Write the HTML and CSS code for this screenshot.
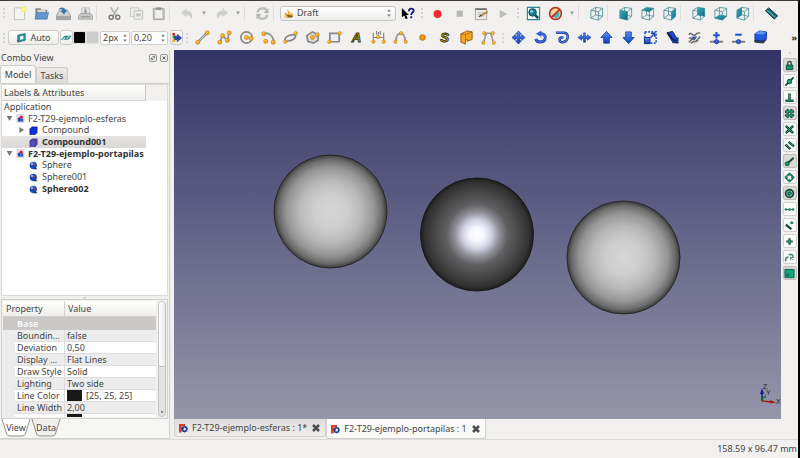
FILE: index.html
```html
<!DOCTYPE html>
<html lang="en">
<head>
    <meta charset="UTF-8">
    <meta name="viewport" content="width=device-width, initial-scale=1.0">
    <title>FreeCAD</title>
    <link rel="stylesheet" href="styles.css">
</head>
<body>
    <svg class="sprite" aria-hidden="true">
        <defs>
            <linearGradient id="blue" x1="0" y1="0" x2="0" y2="1"><stop offset="0" stop-color="#5a94ff"/><stop offset="1" stop-color="#0a3cc0"/></linearGradient>
            <linearGradient id="teal" x1="0" y1="0" x2="1" y2="1"><stop offset="0" stop-color="#3aa9ba"/><stop offset="1" stop-color="#0c6c80"/></linearGradient>
            <radialGradient id="light"><stop offset="0" stop-color="#d6d6d6"/><stop offset="0.3" stop-color="#cecece"/><stop offset="0.55" stop-color="#b9b9b9"/><stop offset="0.78" stop-color="#959595"/><stop offset="0.92" stop-color="#6a6a6a"/><stop offset="1" stop-color="#3c3c3c"/></radialGradient>
            <radialGradient id="dark"><stop offset="0" stop-color="#ffffff"/><stop offset="0.13" stop-color="#f6f6ff"/><stop offset="0.26" stop-color="#cfcfe0"/><stop offset="0.4" stop-color="#8e8e96"/><stop offset="0.54" stop-color="#606063"/><stop offset="0.75" stop-color="#474747"/><stop offset="0.93" stop-color="#303030"/><stop offset="1" stop-color="#1c1c1c"/></radialGradient>
        </defs>
        <symbol id="dot" viewBox="0 0 6 6"><circle cx="3" cy="3" r="2.2" fill="#f9a81c" stroke="#b8770f" stroke-width=".6"/><circle cx="2.4" cy="2.3" r=".7" fill="#ffe08a"/></symbol>
        <symbol id="cube" viewBox="0 0 16 16"><path d="M2 4.500 10 6v9L2 13zM2 4.500 7 1.500 14.500 2.500 10 6M14.500 2.500v8.500L10 15M7 1.500v8L2 13M7 9.500l7.500 1.500" fill="none" stroke="#4d909b" stroke-width=".9"/></symbol>
        <symbol id="doc" viewBox="0 0 10 10"><path d="M1 .5h8v9H1z" fill="#dfe2ee" stroke="#c3c4d0" stroke-width=".6"/><path d="M2 4.500 5 3.500v5L2 8z" fill="#1c3fae"/><circle cx="5.800" cy="3.500" r="1.800" fill="#d2232a"/><path d="M5 5h3v3.500H5z" fill="#2d55cf"/></symbol>
        <symbol id="ball" viewBox="0 0 10 10"><path d="M6 6l3.500 3.200H4z" fill="#222"/><circle cx="4.800" cy="4.800" r="4" fill="#1846b0"/><circle cx="3.500" cy="3.300" r="1.500" fill="#7ca8f5"/><circle cx="6" cy="4" r="1" fill="#e03a3a"/></symbol>
        <symbol id="app" viewBox="0 0 10 10"><path d="M1 1h6v2H3.500v1.500H6V6.500H3.500V9.500H1z" fill="#e03a1c"/><circle cx="6.500" cy="6" r="2.300" fill="none" stroke="#1d3f9c" stroke-width="1.600"/><path d="M6.500 2.700v1.300M6.500 8v1.400M3.200 6h1.300M8.500 6h1.300M4.200 3.700l.9.900M8 7.400l.9.900M8.900 3.700l-.9.900M5 7.400l-.9.900" stroke="#1d3f9c" stroke-width="1"/></symbol>
        <symbol id="spin" viewBox="0 0 6 10"><path d="M1.200 3.500 3 1.200 4.800 3.500zM1.200 6.500 3 8.800 4.800 6.500z" fill="#777"/></symbol>
        <symbol id="drop" viewBox="0 0 6 6"><path d="M.8 1.500h4.400L3 4.800z" fill="#a0a0a0"/></symbol>
        <symbol id="cross" viewBox="0 0 10 10"><path d="M2 2 8 8M8 2 2 8" stroke="#4d4d4d" stroke-width="2.600"/></symbol>
    </svg>

    <header class="toolbars">
        <div class="toolbar">
            <span class="handle"></span>
            <button class="tool" aria-label="New"><svg viewBox="0 0 16 16"><path d="M2.500 2h11v12.500h-11z" fill="#f4f4f2" stroke="#bdbdb8"/><circle cx="12.500" cy="3.500" r="3" fill="#f8ee62"/><circle cx="12.500" cy="3.500" r="1.300" fill="#fffbc0"/></svg></button>
            <button class="tool" aria-label="Open"><svg viewBox="0 0 16 16"><path d="M1.500 2.500H7l1 1.500h6v9H1.500z" fill="#85827b"/><path d="M3.500 4h9v4h-9z" fill="#d6d6d2"/><path d="M3 7h12.500l-1.500 7H1z" fill="#6796cd" stroke="#4778b2" stroke-width=".7"/></svg></button>
            <button class="tool" aria-label="Save"><svg viewBox="0 0 16 16"><path d="M3.500 5h9l3 5v4.500H.5V10z" fill="#d2d2ce" stroke="#86868a" stroke-width=".8"/><path d="M1 10.500h14v3.500H1z" fill="#a5a5a3"/><path d="M2.500 5C3 1 9 .5 10 4h2.200L8.500 9 4.800 5h2C6.500 3 4 3 2.500 5z" fill="#3d73ae"/></svg></button>
            <button class="tool" aria-label="Print"><svg viewBox="0 0 16 16"><path d="M4 2h8v6H4z" fill="#eee" stroke="#aaa" stroke-width=".8"/><path d="M7 3h2v2.500h1.500L8 8 5.500 5.500H7z" fill="#9a9a9a"/><path d="M2.500 8h11l2 2.500V14H.5v-3.500z" fill="#c9c9c7" stroke="#999" stroke-width=".8"/><path d="M3 11.500h10" stroke="#888"/></svg></button>
            <span class="separator"></span>
            <button class="tool" aria-label="Cut"><svg viewBox="0 0 16 16"><path d="M4 1.500 10 11M12 1.500 6 11" stroke="#b0b0b0" stroke-width="1.700"/><circle cx="4.500" cy="12" r="2.200" fill="none" stroke="#777" stroke-width="1.500"/><circle cx="11.500" cy="12" r="2.200" fill="none" stroke="#777" stroke-width="1.500"/></svg></button>
            <button class="tool" aria-label="Copy"><svg viewBox="0 0 16 16"><path d="M1.500 2h9v9h-9z" fill="#efefed" stroke="#c4c4c2"/><path d="M5.500 5h9v9h-9z" fill="#ececea" stroke="#bebebc"/><path d="M7.500 8h5v3h-5z" fill="#c5c5c3"/></svg></button>
            <button class="tool" aria-label="Paste"><svg viewBox="0 0 16 16"><path d="M2.500 2.500h11.500v12H2.500z" fill="#c5c5c3" stroke="#a4a4a2"/><path d="M4.500 4.500h7.500v8.500H4.500z" fill="#f0f0ee"/><path d="M5.500 1.500h5.500v2.500H5.500z" fill="#8f8f8f"/></svg></button>
            <span class="separator"></span>
            <button class="tool" aria-label="Undo"><svg viewBox="0 0 16 16"><path d="M1 7 7 2v3c6 0 8 5 4 9.500.5-3.500-1-5-4-5V12z" fill="#cfcfcd"/></svg></button>
            <button class="arrow" aria-label="Undo list"><svg viewBox="0 0 6 6"><use href="#drop"/></svg></button>
            <button class="tool" aria-label="Redo"><svg viewBox="0 0 16 16"><path d="M15 7 9 2v3C3 5 1 10 5 14.500 4.500 11 6 9.500 9 9.500V12z" fill="#cfcfcd"/></svg></button>
            <button class="arrow" aria-label="Redo list"><svg viewBox="0 0 6 6"><use href="#drop"/></svg></button>
            <span class="separator"></span>
            <button class="tool" aria-label="Refresh"><svg viewBox="0 0 16 16"><path d="M3 7c0-5 7-6 9.500-2.500M13 9c0 5-7 6-9.500 2.500" fill="none" stroke="#bdbdbb" stroke-width="2.500"/><path d="M14.500 2v5.500H9zM1.500 14V8.500H7z" fill="#b6b6b4"/></svg></button>
            <span class="separator"></span>
            <div class="combo">
                <svg viewBox="0 0 12 12"><path d="M4 .5 7 6l4 1.500v3H5z" fill="#e8b02c"/><path d="M1 5.500 4.500 8 11 9.500 9 11.500H1z" fill="#8a5a12"/><path d="M1 5v6.500h4z" fill="#f3cf5d"/></svg>
                <select aria-label="Workbench"><option>Draft</option></select>
                <svg class="spin" viewBox="0 0 6 10"><use href="#spin"/></svg>
            </div>
            <button class="tool" aria-label="What's this?"><svg viewBox="0 0 16 16"><path d="M2 2v10l2.500-2 1.700 4 2-1-1.700-3.500H9.500z" fill="#000"/><path d="M9.500 5.500C9.500 2 14.500 2 14.500 5c0 2-2.500 2-2.500 4.500M12 11v2" fill="none" stroke="#1d1b8e" stroke-width="2"/></svg></button>
            <span class="handle"></span>
            <button class="tool" aria-label="Record macro"><svg viewBox="0 0 16 16"><circle cx="8" cy="8.500" r="4.200" fill="#ea2a2d"/></svg></button>
            <button class="tool" aria-label="Stop macro"><svg viewBox="0 0 16 16"><path d="M5 5h6.500v6.500H5z" fill="#b5b5b3"/></svg></button>
            <button class="tool" aria-label="Macros"><svg viewBox="0 0 16 16"><path d="M1.500 3h12v11.500h-12z" fill="#ecece8" stroke="#999994" stroke-width=".9"/><path d="M1.500 2.500h12v1.800h-12z" fill="#6d6d6d"/><path d="M3.500 7h7M3.500 9h5M3.500 11h7" stroke="#bbb" stroke-width=".8"/><path d="M7 10.500 14.500 6" stroke="#b98a36" stroke-width="2"/><path d="M5.500 11.500 8 9.500" stroke="#444" stroke-width="1.200"/></svg></button>
            <button class="tool" aria-label="Run macro"><svg viewBox="0 0 16 16"><path d="M4 4v9l8-4.500z" fill="#bcbcba"/></svg></button>
            <span class="handle"></span>
            <button class="tool" aria-label="Fit all"><svg viewBox="0 0 16 16"><path d="M1.500 1.500h13v13h-13z" fill="#eef6f7" stroke="#2a8494" stroke-width="1.200"/><path d="M9 9l4 4" stroke="#0c4d5a" stroke-width="2.800"/><circle cx="7" cy="6.800" r="4" fill="#167f94" stroke="#0a4856"/><circle cx="6" cy="5.500" r="1.600" fill="#8bd2de"/></svg></button>
            <button class="tool" aria-label="Draw style"><svg viewBox="0 0 16 16"><circle cx="8" cy="8" r="6.300" fill="#f5c9a9" stroke="#b32822" stroke-width="1.600"/><path d="M4.500 6 8 3.500l4 1.500v6L8.500 13l-4-2z" fill="#45b5c4"/><path d="M4 5 9 3l3 2-7 6z" fill="#ffe08c"/><path d="M12.500 3.500 3.500 12.500" stroke="#c32a22" stroke-width="1.800"/></svg></button>
            <button class="arrow" aria-label="Draw style list"><svg viewBox="0 0 6 6"><use href="#drop"/></svg></button>
            <span class="separator"></span>
            <button class="tool" aria-label="Isometric"><svg viewBox="0 0 16 16"><use href="#cube"/></svg></button>
            <span class="separator"></span>
            <button class="tool" aria-label="Front"><svg viewBox="0 0 16 16"><use href="#cube"/><path d="M2 4.500 10 6v9L2 13z" fill="url(#teal)"/></svg></button>
            <button class="tool" aria-label="Top"><svg viewBox="0 0 16 16"><use href="#cube"/><path d="M2 4.500 7 1.500l7.500 1L10 6z" fill="url(#teal)"/></svg></button>
            <button class="tool" aria-label="Right"><svg viewBox="0 0 16 16"><use href="#cube"/><path d="M10 6l4.500-3.500V11L10 15z" fill="url(#teal)"/></svg></button>
            <span class="separator"></span>
            <button class="tool" aria-label="Rear"><svg viewBox="0 0 16 16"><use href="#cube"/><path d="M7 1.500l7.500 1V11L7 9.500z" fill="url(#teal)"/></svg></button>
            <button class="tool" aria-label="Bottom"><svg viewBox="0 0 16 16"><use href="#cube"/><path d="M2 13l5-3.500 7.500 1.500L10 15z" fill="url(#teal)"/></svg></button>
            <button class="tool" aria-label="Left"><svg viewBox="0 0 16 16"><use href="#cube"/><path d="M2 4.500 7 1.500v8L2 13z" fill="url(#teal)"/></svg></button>
            <span class="separator"></span>
            <button class="tool" aria-label="Measure"><svg viewBox="0 0 16 16"><path d="M1.500 5 5 2l9.500 8.500-3.500 3.500z" fill="#1b5f6d" stroke="#17323a"/><path d="M3.500 4.500 12 12" stroke="#57a6b5" stroke-width="1.600"/></svg></button>
        </div>

        <div class="toolbar">
            <span class="handle"></span>
            <button class="framed auto"><svg viewBox="0 0 12 12"><path d="M2 3.500 10 1.500V9L2 11z" fill="#269aa8" stroke="#126271" stroke-width=".8"/><path d="M4.500 5 8 4v3.500l-3.500 1z" fill="#fff"/><path d="M1 9l2 2" stroke="#333"/></svg>Auto</button>
            <button class="framed small" aria-label="Construction mode"><svg viewBox="0 0 12 12"><path d="M0 8.500 4 4h7.500L8 8.500z" fill="#1c8390"/><path d="M2 8.500 4.500 6M6 7.500 9 4.500" stroke="#bfe6d2" stroke-width="1.200"/></svg></button>
            <button class="swatch black" aria-label="Line color"></button>
            <button class="swatch gray" aria-label="Face color"></button>
            <div class="spinbox width"><input type="text" value="2px" aria-label="Line width"><svg class="spin" viewBox="0 0 6 10"><use href="#spin"/></svg></div>
            <div class="spinbox scale"><input type="text" value="0,20" aria-label="Text size"><svg class="spin" viewBox="0 0 6 10"><use href="#spin"/></svg></div>
            <button class="framed small" aria-label="Apply style"><svg viewBox="0 0 12 12"><path d="M1.500 1h3v3h-3z" fill="#d92525"/><path d="M1.500 4h3v3h-3z" fill="#4dac2d"/><path d="M1.500 7h3v4h-3z" fill="#e8b921"/><path d="M4 4.500h3V2.500L11.500 6.500 7 10.500V8.500H4z" fill="#2346c0" stroke="#132468" stroke-width=".6"/></svg></button>
            <span class="handle"></span>
            <button class="tool" aria-label="Line"><svg viewBox="0 0 16 16"><path d="M3 13 13 3" stroke="#888" stroke-width="2.500"/><path d="M3 13 13 3" stroke="#ddd"/><use href="#dot" x="0" y="10" width="6" height="6"/><use href="#dot" x="10" y="0" width="6" height="6"/></svg></button>
            <button class="tool" aria-label="Wire"><svg viewBox="0 0 16 16"><path d="M3 13 6 6l5 5 2-8" fill="none" stroke="#999" stroke-width="2"/><use href="#dot" x="0" y="10" width="6" height="6"/><use href="#dot" x="3" y="3" width="6" height="6"/><use href="#dot" x="8" y="8" width="6" height="6"/><use href="#dot" x="10" y="0" width="6" height="6"/></svg></button>
            <button class="tool" aria-label="Circle"><svg viewBox="0 0 16 16"><circle cx="8" cy="8" r="6" fill="#eee" stroke="#888" stroke-width="1.800"/><use href="#dot" x="5" y="5" width="6" height="6"/><use href="#dot" x="10" y="6" width="6" height="6"/></svg></button>
            <button class="tool" aria-label="Arc"><svg viewBox="0 0 16 16"><path d="M3 4c6-2 10 3 11 9" fill="none" stroke="#999" stroke-width="2"/><use href="#dot" x="0" y="1" width="6" height="6"/><use href="#dot" x="2" y="9" width="6" height="6"/><use href="#dot" x="10" y="10" width="6" height="6"/></svg></button>
            <button class="tool" aria-label="Ellipse"><svg viewBox="0 0 16 16"><path d="M2 11c0-4 5-6 11-6 2 3-3 7-9 7-2 0-2-.5-2-1z" fill="#eee" stroke="#888" stroke-width="1.800"/><use href="#dot" x="0" y="10" width="5" height="5"/><use href="#dot" x="11" y="1" width="5" height="5"/></svg></button>
            <button class="tool" aria-label="Polygon"><svg viewBox="0 0 16 16"><path d="M2 6 8 2l6 3v6l-5 3-6-2z" fill="#ddd" stroke="#888" stroke-width="1.800"/><use href="#dot" x="5" y="5" width="6" height="6"/><use href="#dot" x="10" y="2" width="6" height="6"/></svg></button>
            <button class="tool" aria-label="Rectangle"><svg viewBox="0 0 16 16"><path d="M3 3.500h10v9H3z" fill="#eee" stroke="#888" stroke-width="1.800"/><use href="#dot" x="0" y="10" width="5" height="5"/><use href="#dot" x="11" y="1" width="5" height="5"/></svg></button>
            <button class="tool" aria-label="Text"><svg viewBox="0 0 16 16"><text x="8" y="13" class="glyph">A</text></svg></button>
            <button class="tool" aria-label="Dimension"><svg viewBox="0 0 16 16"><path d="M2.500 3v10M13.500 3v10M3 8h10M6 1v4M8 2v3M10 1v4" stroke="#888" stroke-width="1.300"/><use href="#dot" x="0" y="10" width="5" height="5"/><use href="#dot" x="11" y="10" width="5" height="5"/><use href="#dot" x="5" y="5" width="5" height="5"/></svg></button>
            <button class="tool" aria-label="B-spline"><svg viewBox="0 0 16 16"><path d="M3 12C3 1 13 1 13 12" fill="none" stroke="#999" stroke-width="2"/><use href="#dot" x="0" y="10" width="5" height="5"/><use href="#dot" x="11" y="10" width="5" height="5"/><use href="#dot" x="6" y="1" width="5" height="5"/></svg></button>
            <button class="tool" aria-label="Point"><svg viewBox="0 0 16 16"><circle cx="8" cy="8" r="3" fill="#f79a12" stroke="#a35b05" stroke-width=".8"/></svg></button>
            <button class="tool" aria-label="Shape from text"><svg viewBox="0 0 16 16"><text x="8" y="13" class="glyph">S</text></svg></button>
            <button class="tool" aria-label="Facebinder"><svg viewBox="0 0 16 16"><path d="M2 4 9 1l5 1v8l-5 2v-2l-2 1v4l-5-2z" fill="#f9a51b" stroke="#85540b" stroke-width=".9"/><path d="M7 5v6M2 4l5 1 7-3" fill="none" stroke="#a3690f" stroke-width=".9"/></svg></button>
            <button class="tool" aria-label="Bezier curve"><svg viewBox="0 0 16 16"><path d="M3 13C4 8 5 5 6 3M13 13C12 8 11 5 10 3M2 3.500h12" fill="none" stroke="#999" stroke-width="1.700"/><use href="#dot" x="0" y="11" width="5" height="5"/><use href="#dot" x="11" y="11" width="5" height="5"/><use href="#dot" x="1" y="1" width="5" height="5"/><use href="#dot" x="10" y="1" width="5" height="5"/></svg></button>
            <span class="handle"></span>
            <button class="tool" aria-label="Move"><svg viewBox="0 0 16 16"><path d="M8 1l3 3.500H9.200v2.300h2.300V5L15 8l-3.500 3V9.200H9.200v2.300H11L8 15l-3-3.500h1.800V9.200H4.500V11L1 8l3.500-3v1.800h2.300V4.500H5z" fill="url(#blue)" stroke="#102f85" stroke-width=".7"/></svg></button>
            <button class="tool" aria-label="Rotate"><svg viewBox="0 0 16 16"><path d="M3 9.500C4 14 12 14 13 9c.5-3-2-5.500-5-5" fill="none" stroke="#12338f" stroke-width="3"/><path d="M3 9.500C4 14 12 14 13 9c.5-3-2-5.500-5-5" fill="none" stroke="#3a73ee" stroke-width="1.600"/><path d="M3 4 9 .5v7z" fill="#2d61dd"/></svg></button>
            <button class="tool" aria-label="Offset"><svg viewBox="0 0 16 16"><path d="M1 3h9c6 1 4 10-2 10-4 0-4-5-1-5h2" fill="none" stroke="#15399d" stroke-width="2.700"/><path d="M1 3h9c6 1 4 10-2 10-4 0-4-5-1-5h2" fill="none" stroke="#6798f5"/></svg></button>
            <button class="tool" aria-label="Trimex"><svg viewBox="0 0 16 16"><path d="M1 8l4-3v2h2V3h2v4h2V5l4 3-4 3V9H9v4H7V9H5v2z" fill="url(#blue)" stroke="#15358e" stroke-width=".6"/></svg></button>
            <button class="tool" aria-label="Upgrade"><svg viewBox="0 0 16 16"><path d="M8 1.500 14 8h-3v6H5V8H2z" fill="url(#blue)" stroke="#102f85" stroke-width=".8"/></svg></button>
            <button class="tool" aria-label="Downgrade"><svg viewBox="0 0 16 16"><path d="M8 14.500 2 8h3V2h6v6h3z" fill="url(#blue)" stroke="#102f85" stroke-width=".8"/></svg></button>
            <button class="tool" aria-label="Scale"><svg viewBox="0 0 16 16"><path d="M2 2h12v12H2z" fill="none" stroke="#2559dc" stroke-width="1.700" stroke-dasharray="2 1.500"/><path d="M1.500 8h6v6.500h-6z" fill="url(#blue)" stroke="#102f85"/><path d="M8 8l4-4M8.500 3.500h4v4" fill="none" stroke="#1b48c0" stroke-width="1.600"/></svg></button>
            <button class="tool" aria-label="Edit"><svg viewBox="0 0 16 16"><path d="M2 3l6-1.500 5 8-5 3z" fill="#164bd3" stroke="#0c2059"/><path d="M8 13.500 14 8v6z" fill="#1738a5" stroke="#0c2059" stroke-width=".7"/><path d="M3 3.500l7 8" stroke="#111b40" stroke-width="1.500"/></svg></button>
            <button class="tool" aria-label="Wire to B-spline"><svg viewBox="0 0 16 16"><path d="M2 5c3-4 4 3 7 0s4-1 5-2M2 13 7 8M9 13l5-6M2 9c4-2 4 3 6 1M4 14c4-3 5-1 8-3" fill="none" stroke="#666" stroke-width="1.500"/><path d="M5 7l3 4 3-4z" fill="#2652ba"/></svg></button>
            <button class="tool" aria-label="Add point"><svg viewBox="0 0 16 16"><path d="M1 12.500h14" stroke="#777" stroke-width="2"/><path d="M8 2v7M4.500 5.500h7" stroke="#1c50d2" stroke-width="2.200"/><circle cx="8" cy="12.500" r="2.300" fill="#2d68ea" stroke="#15307d" stroke-width=".8"/></svg></button>
            <button class="tool" aria-label="Remove point"><svg viewBox="0 0 16 16"><path d="M1 12.500h14" stroke="#777" stroke-width="2"/><path d="M4.500 5h7" stroke="#1c50d2" stroke-width="2.200"/><circle cx="8" cy="12.500" r="2.300" fill="#2d68ea" stroke="#15307d" stroke-width=".8"/></svg></button>
            <button class="tool" aria-label="Shape 2D view"><svg viewBox="0 0 16 16"><path d="M1 11l5-2 9 1-4 4.500-9-1z" fill="#333c48"/><path d="M2 4l5-3 7.500 1v7L10 12l-8-1.500z" fill="#1d58df" stroke="#102a75" stroke-width=".8"/><path d="M2 4l5-3 7.500 1L10 5z" fill="#5d95ff"/></svg></button>
            <button class="more" aria-label="More tools">»</button>
        </div>
    </header>

    <main class="workspace">
        <aside class="dock">
            <div class="dock-title">
                <span>Combo View</span>
                <button class="mini" aria-label="Float"><svg viewBox="0 0 8 8"><path d="M3.200 1.800h3v3M4.800 6.200H1.800V3.200" fill="none" stroke="#555"/><path d="M3 5l2-2" stroke="#555"/></svg></button>
                <button class="mini" aria-label="Close"><svg viewBox="0 0 8 8"><path d="M2 2l4 4M6 2 2 6" stroke="#555" stroke-width="1.300"/></svg></button>
            </div>
            <div class="dock-tabs">
                <button class="active">Model</button>
                <button>Tasks</button>
            </div>
            <div class="tree">
                <div class="tree-head"><span>Labels &amp; Attributes</span></div>
                <ul>
                    <li class="root">Application</li>
                    <li class="doc"><span class="open"></span><svg viewBox="0 0 10 10"><use href="#doc"/></svg>F2-T29-ejemplo-esferas</li>
                    <li class="item"><span class="closed"></span><svg viewBox="0 0 10 10"><path d="M1 3 3.500 1H9v6L7 9.500H1z" fill="#0b32d8" stroke="#091f7d" stroke-width=".8"/></svg>Compound</li>
                    <li class="item selected bold"><span></span><svg viewBox="0 0 10 10"><path d="M1 3 3.500 1H9v6L7 9.500H1z" fill="#5a4bc0" stroke="#3a3585" stroke-width=".8"/><path d="M1 3h6v6.500M7 3l2-2" fill="none" stroke="#3a3585" stroke-width=".7"/></svg>Compound001</li>
                    <li class="doc bold"><span class="open"></span><svg viewBox="0 0 10 10"><use href="#doc"/></svg>F2-T29-ejemplo-portapilas</li>
                    <li class="item"><span></span><svg viewBox="0 0 10 10"><use href="#ball"/></svg>Sphere</li>
                    <li class="item"><span></span><svg viewBox="0 0 10 10"><use href="#ball"/></svg>Sphere001</li>
                    <li class="item bold"><span></span><svg viewBox="0 0 10 10"><use href="#ball"/></svg>Sphere002</li>
                </ul>
            </div>
            <div class="grip"></div>
            <div class="properties">
                <div class="property-view">
                    <table>
                        <colgroup><col class="indent"><col class="name"><col></colgroup>
                        <thead><tr><th colspan="2">Property</th><th>Value</th></tr></thead>
                        <tbody>
                            <tr class="group"><td></td><td colspan="2">Base</td></tr>
                            <tr class="odd"><td></td><td>Boundin…</td><td>false</td></tr>
                            <tr><td></td><td>Deviation</td><td>0,50</td></tr>
                            <tr class="odd"><td></td><td>Display …</td><td>Flat Lines</td></tr>
                            <tr><td></td><td>Draw Style</td><td>Solid</td></tr>
                            <tr class="odd"><td></td><td>Lighting</td><td>Two side</td></tr>
                            <tr><td></td><td>Line Color</td><td><i class="color"></i>[25, 25, 25]</td></tr>
                            <tr class="odd"><td></td><td>Line Width</td><td>2,00</td></tr>
                            <tr><td></td><td></td><td><i class="color"></i></td></tr>
                        </tbody>
                    </table>
                </div>
                <div class="scrollbar"><span class="thumb"></span><svg viewBox="0 0 8 8"><path d="M2 3h4L4 6z" fill="#666"/></svg></div>
            </div>
            <div class="bottom-tabs">
                <button><svg viewBox="0 0 32 18" preserveAspectRatio="none"><path d="M1 0 6 15q1 2 3 2h14q2 0 3-2L31 0" fill="#fff" stroke="#8b8b89"/></svg><span>View</span></button>
                <button><svg viewBox="0 0 32 18" preserveAspectRatio="none"><path d="M1 0 6 15q1 2 3 2h14q2 0 3-2L31 0" fill="#f0efed" stroke="#8b8b89"/></svg><span>Data</span></button>
            </div>
        </aside>

        <section class="mdi">
            <div class="view">
                <svg viewBox="0 0 607 369" role="img" aria-label="3D view">
                    <circle cx="156.500" cy="161.500" r="56.500" fill="url(#light)" stroke="#262626"/>
                    <circle cx="303" cy="184.500" r="56.500" fill="url(#dark)" stroke="#1a1a1a"/>
                    <circle cx="449.500" cy="207.500" r="56.500" fill="url(#light)" stroke="#262626"/>
                    <path d="M588 351v-8" stroke="#1a1a8c" stroke-width="1.500"/>
                    <path d="M586 344l2-6 2 6z" fill="#1a1a8c"/>
                    <path d="M588 351l9 1" stroke="#a01818" stroke-width="1.500"/>
                    <path d="M596 350l6 2.500-6 1z" fill="#a01818"/>
                    <path d="M588 351l2-4" stroke="#138a13"/>
                    <path d="M589 348l3-4v4z" fill="#138a13"/>
                    <text class="axis" x="589" y="339">Z</text>
                    <text class="axis" x="592" y="345">Y</text>
                    <text class="axis" x="602" y="354">X</text>
                </svg>
            </div>
            <div class="mdi-tabs">
                <div class="mdi-tab"><svg viewBox="0 0 10 10"><use href="#app"/></svg><a href="#">F2-T29-ejemplo-esferas : 1*</a><button aria-label="Close esferas"><svg viewBox="0 0 10 10"><use href="#cross"/></svg></button></div>
                <div class="mdi-tab active"><svg viewBox="0 0 10 10"><use href="#app"/></svg><a href="#">F2-T29-ejemplo-portapilas : 1</a><button aria-label="Close portapilas"><svg viewBox="0 0 10 10"><use href="#cross"/></svg></button></div>
            </div>
        </section>

        <nav class="snaps">
            <span class="handle flat"></span>
            <button class="on" aria-label="Snap lock"><svg viewBox="0 0 12 12"><path d="M4 6V3.500c0-2.500 4-2.500 4 0V6" fill="none" stroke="#37514b" stroke-width="1.500"/><path d="M2.500 5.500h7v5h-7z" fill="#10916f" stroke="#15473a"/></svg></button>
            <button aria-label="Midpoint"><svg viewBox="0 0 12 12"><path d="M1.500 10.500l9-9" stroke="#15473a" stroke-width="2"/><circle cx="6" cy="6" r="2.500" fill="#12a37c" stroke="#15473a"/></svg></button>
            <button aria-label="Perpendicular"><svg viewBox="0 0 12 12"><path d="M6 1.500v8M1.500 9.500h9" stroke="#15473a" stroke-width="2.700"/><path d="M6 2v7M2 9.500h8" stroke="#12a37c"/></svg></button>
            <button class="on" aria-label="Grid"><svg viewBox="0 0 12 12"><path d="M4 1v10M8 1v10M1 4h10M1 8h10" stroke="#15473a" stroke-width="2.300"/><path d="M4 2v8M8 2v8M2 4h8M2 8h8" stroke="#12a37c"/></svg></button>
            <button aria-label="Intersection"><svg viewBox="0 0 12 12"><path d="M2 2l8 8M10 2l-8 8" stroke="#15473a" stroke-width="2.800"/><path d="M2.500 2.500l7 7M9.500 2.500l-7 7" stroke="#12a37c"/></svg></button>
            <button aria-label="Parallel"><svg viewBox="0 0 12 12"><path d="M1.500 5 7 10M5 2l6 5" stroke="#15473a" stroke-width="2.700"/><path d="M2 5.500 6.500 9.500M5.500 2.500l5 4" stroke="#12a37c"/></svg></button>
            <button class="on" aria-label="Endpoint"><svg viewBox="0 0 12 12"><path d="M4 8l6.500-6" stroke="#15473a" stroke-width="2.200"/><circle cx="3.500" cy="8.500" r="2.200" fill="#12a37c" stroke="#15473a"/></svg></button>
            <button aria-label="Angle"><svg viewBox="0 0 12 12"><circle cx="6" cy="6" r="3.500" fill="none" stroke="#15473a" stroke-width="1.300"/><path d="M6 .8v3.400M6 7.800v3.400M.8 6h3.400M7.800 6h3.400" stroke="#128664" stroke-width="2.700"/></svg></button>
            <button class="on" aria-label="Center"><svg viewBox="0 0 12 12"><circle cx="6" cy="6" r="4.300" fill="#75b5a3" stroke="#15473a" stroke-width="1.800"/><circle cx="6" cy="6" r="1.800" fill="#12a37c" stroke="#15473a"/></svg></button>
            <button aria-label="Extension"><svg viewBox="0 0 12 12"><path d="M1 6h10" stroke="#15473a" stroke-width=".8"/><circle cx="2" cy="6" r="1.300" fill="#128664"/><circle cx="6" cy="6" r="1.500" fill="#128664"/><circle cx="10" cy="6" r="1.300" fill="#128664"/></svg></button>
            <button aria-label="Near"><svg viewBox="0 0 12 12"><path d="M2 5l6 5" stroke="#15473a" stroke-width="2.400"/><circle cx="8.500" cy="3" r="1.700" fill="#128664"/></svg></button>
            <button aria-label="Ortho"><svg viewBox="0 0 12 12"><path d="M6 2.500v7M2.500 6h7" stroke="#15473a" stroke-width="2.400"/><path d="M6 3v6M3 6h6" stroke="#12a37c" stroke-width=".8"/></svg></button>
            <button aria-label="Special"><svg viewBox="0 0 12 12"><path d="M2 10C1 7 3 5 5 6M5 3c3-1 5 0 5 3" fill="none" stroke="#4a8577" stroke-width="1.800"/><path d="M7 6l3 3M7 9V6h3" fill="none" stroke="#4a8577"/></svg></button>
            <button class="on" aria-label="Working plane"><svg viewBox="0 0 12 12"><path d="M1 1.500h10v9H1z" fill="#10a67d" stroke="#16594a"/><circle cx="4" cy="7.500" r="1.300" fill="none" stroke="#16594a"/></svg></button>
        </nav>
    </main>

    <footer class="status">158.59 x 96.47 mm</footer>
</body>
</html>
```
FILE: styles.css
```css
* {
    box-sizing: border-box;
}
body {
    margin: 0;
    height: 100vh;
    display: flex;
    flex-direction: column;
    overflow: hidden;
    background: #f1f0ee;
    border-top: 1px solid #3f3b37;
    border-right: 2px solid #000;
    font-family: "Noto Sans", "Open Sans", sans-serif;
    font-size: 9px;
    line-height: 12px;
    color: #444;
}
button, input, select {
    font: inherit;
    color: inherit;
    margin: 0;
    padding: 0;
    border: none;
    background: none;
}
svg {
    display: block;
    flex: none;
}
.sprite {
    position: absolute;
    width: 0;
    height: 0;
}

/* Toolbars */
.toolbars {
    flex: none;
}
.toolbar {
    display: flex;
    align-items: center;
    height: 24px;
}
.toolbar + .toolbar {
    height: 25px;
}
.handle {
    flex: none;
    width: 8px;
    height: 10px;
    background: radial-gradient(circle, #d6d5d2 1px, transparent 1px) center / 4px 4px;
    background-clip: content-box;
    padding: 0 2px;
}
.separator {
    flex: none;
    width: 7px;
    height: 16px;
    border-left: 1px solid #dddcda;
    background-clip: content-box;
    border-right: 6px solid transparent;
}
.tool {
    flex: none;
    width: 22px;
    height: 22px;
    display: flex;
    align-items: center;
    justify-content: center;
}
.tool svg {
    width: 15px;
    height: 15px;
}
.arrow {
    flex: none;
    width: 12px;
}
.arrow svg {
    width: 6px;
    height: 6px;
    margin: auto;
}
.glyph {
    font: italic bold 14px "Liberation Sans", sans-serif;
    text-anchor: middle;
    fill: #e5c51b;
    stroke: #3a3206;
    stroke-width: 1px;
}
.combo {
    flex: none;
    display: flex;
    align-items: center;
    gap: 3px;
    width: 116px;
    height: 15px;
    padding: 0 3px;
    border: 1px solid #c6c4c0;
    border-radius: 3px;
    background: linear-gradient(#ffffff, #ececea);
}
.combo svg {
    width: 10px;
    height: 10px;
}
.combo select {
    flex: 1;
    min-width: 0;
    appearance: none;
}
.combo .spin, .spinbox .spin {
    width: 6px;
    height: 10px;
}
.framed {
    flex: none;
    display: flex;
    align-items: center;
    justify-content: center;
    gap: 3px;
    height: 15px;
    border: 1px solid #cccac6;
    border-radius: 3px;
    background: linear-gradient(#ffffff, #ececea);
}
.framed svg {
    width: 11px;
    height: 11px;
}
.auto {
    width: 51px;
    margin-right: 1px;
}
.small {
    width: 13px;
}
.swatch {
    flex: none;
    width: 13px;
    height: 13px;
    border: 1px solid #e0dfdc;
    border-radius: 2px;
}
.black {
    background: #000;
}
.gray {
    background: #cccccc;
}
.spinbox {
    flex: none;
    display: flex;
    align-items: center;
    height: 14px;
    margin-left: 1px;
    padding: 0 1px 0 2px;
    border: 1px solid #d0cecb;
    border-radius: 2px;
    background: #fff;
}
.spinbox input {
    flex: 1;
    min-width: 0;
    width: 100%;
}
.width {
    width: 30px;
}
.scale {
    width: 37px;
    margin-right: 2px;
}
.more {
    flex: 1;
    text-align: right;
    padding-right: 1px;
    font-weight: bold;
    color: #222;
}

/* Main area */
.workspace {
    flex: 1;
    min-height: 0;
    display: flex;
}
.dock {
    flex: none;
    width: 170px;
    margin-right: 4px;
    display: flex;
    flex-direction: column;
    border-right: 1px solid #d3d1ce;
}
.dock-title {
    display: flex;
    align-items: center;
    gap: 3px;
    height: 16px;
    padding: 0 1px;
}
.dock-title span {
    flex: 1;
}
.mini {
    width: 8px;
    height: 8px;
    border: 1px solid #999;
    border-radius: 2px;
}
.mini svg {
    width: 6px;
    height: 6px;
}
.dock-tabs {
    display: flex;
    align-items: flex-end;
    height: 18px;
    border-bottom: 1px solid #d3d1ce;
}
.dock-tabs button {
    width: 32px;
    height: 16px;
    border: 1px solid #cfcdca;
    border-bottom: none;
    border-radius: 3px 3px 0 0;
    background: linear-gradient(#ebeae8, #dcdbd8);
}
.dock-tabs .active {
    width: 36px;
    height: 18px;
    background: #f8f8f7;
}
.tree {
    flex: 1;
    min-height: 0;
    margin: 0 1px;
    background: #fff;
    border: 1px solid #dcdad7;
}
.tree-head {
    height: 16px;
    background: #f1f0ee;
}
.tree-head span {
    display: block;
    width: 144px;
    height: 16px;
    padding: 2px;
    border-right: 1px solid #c9c8c5;
    border-bottom: 1px solid #d3d2cf;
    background: linear-gradient(#ffffff, #efeeec);
}
.tree ul {
    margin: 0;
    padding: 0;
    list-style: none;
}
.tree li {
    display: flex;
    align-items: center;
    gap: 4px;
    width: 144px;
    height: 12px;
    white-space: nowrap;
}
.tree .root {
    padding-left: 2px;
}
.tree .doc {
    height: 11px;
    gap: 3px;
    padding-left: 4px;
}
.tree .item {
    padding-left: 16px;
}
.tree li span {
    width: 7px;
    height: 6px;
}
.tree li svg {
    width: 9px;
    height: 9px;
}
.tree .open {
    background: #777;
    clip-path: polygon(10% 10%, 90% 10%, 50% 90%);
}
.tree .closed {
    background: #777;
    clip-path: polygon(20% 0, 85% 50%, 20% 100%);
}
.tree .selected {
    background: linear-gradient(#e5e4e3, #d9d8d6);
}
.bold {
    font-weight: bold;
    color: #333;
}
.grip {
    height: 3px;
    background: radial-gradient(circle, #c4c3c0 1px, transparent 1px) center / 3px 3px no-repeat;
}
.properties {
    display: flex;
    gap: 2px;
    height: 120px;
    margin: 0 1px;
    padding: 1px;
    border: 1px solid #d3d1ce;
}
.property-view {
    flex: 1;
    min-width: 0;
    overflow: hidden;
    background: #fff;
}
.property-view table {
    width: 100%;
    table-layout: fixed;
    border-collapse: separate;
    border-spacing: 0;
}
.indent {
    width: 12px;
}
.name {
    width: 50px;
}
.property-view th {
    height: 16px;
    padding: 0 3px;
    font-weight: normal;
    text-align: left;
    background: linear-gradient(#ffffff, #efeeec);
    border-bottom: 1px solid #d0cfcc;
}
.property-view th:first-child {
    border-right: 1px solid #d0cfcc;
}
.property-view td {
    height: 12px;
    padding: 0 2px;
    line-height: 11px;
    white-space: nowrap;
    border-bottom: 1px solid #dcdcdc;
}
.property-view td:first-child {
    padding: 0;
    border: none;
    background: #ececec;
}
.property-view td:nth-child(2) {
    border-right: 1px solid #dcdcdc;
}
.property-view .odd td {
    background: #ececec;
}
.property-view .group td {
    height: 13px;
    border: none;
    background: #c9c8c7;
    color: #f7f7f7;
    font-weight: bold;
}
.color {
    float: left;
    width: 15px;
    height: 11px;
    margin-right: 4px;
    background: #191919;
}
.scrollbar {
    flex: none;
    width: 8px;
    display: flex;
    flex-direction: column;
    justify-content: space-between;
    border: 1px solid #c4c3c0;
    border-radius: 4px;
    background: #e4e3e1;
}
.thumb {
    height: 65px;
    border-bottom: 1px solid #b6b5b2;
    border-radius: 4px;
    background: linear-gradient(90deg, #ffffff, #ebeae8);
}
.scrollbar svg {
    width: 6px;
    height: 8px;
}
.bottom-tabs {
    display: flex;
    height: 20px;
    padding-left: 1px;
    border-bottom: 1px solid #d3d1ce;
    background: #f6f6f5;
}
.bottom-tabs button {
    display: grid;
    place-items: center;
    width: 30px;
    height: 18px;
}
.bottom-tabs svg, .bottom-tabs span {
    grid-area: 1 / 1;
}
.bottom-tabs svg {
    width: 100%;
    height: 18px;
}

/* 3D view and document tabs */
.mdi {
    flex: 1;
    min-width: 0;
    display: flex;
    flex-direction: column;
}
.view {
    flex: 1;
    min-height: 0;
    background: linear-gradient(#333366, #9696aa);
}
.view svg {
    width: 100%;
    height: 100%;
}
.axis {
    font: 7px "Liberation Sans", sans-serif;
    fill: #222;
}
.mdi-tabs {
    display: flex;
    align-items: flex-start;
    height: 20px;
}
.mdi-tab {
    display: flex;
    align-items: center;
    gap: 4px;
    height: 18px;
    padding: 0 4px 0 3px;
    border: 1px solid #d3d1ce;
    border-top: none;
    border-radius: 0 0 3px 3px;
    background: linear-gradient(#dddcda, #efeeec);
}
.mdi-tab.active {
    height: 20px;
    background: #fafaf9;
}
.mdi-tab a {
    color: inherit;
    text-decoration: none;
}
.mdi-tab svg {
    width: 10px;
    height: 10px;
}

/* Snap toolbar */
.snaps {
    flex: none;
    width: 17px;
    display: flex;
    flex-direction: column;
    align-items: center;
    gap: 2px;
}
.snaps .flat {
    width: 8px;
    height: 6px;
}
.snaps button {
    flex: none;
    display: flex;
    align-items: center;
    justify-content: center;
    width: 14px;
    height: 14px;
    border: 1px solid #d3d1ce;
    border-radius: 2px;
    background: #fbfbfa;
}
.snaps .on {
    background: #dbdad7;
    border-color: #bfbdb9;
}
.snaps button svg {
    width: 11px;
    height: 11px;
}
.status {
    flex: none;
    height: 19px;
    padding: 3px 1px;
    border-top: 1px solid #dddcda;
    text-align: right;
}
```
